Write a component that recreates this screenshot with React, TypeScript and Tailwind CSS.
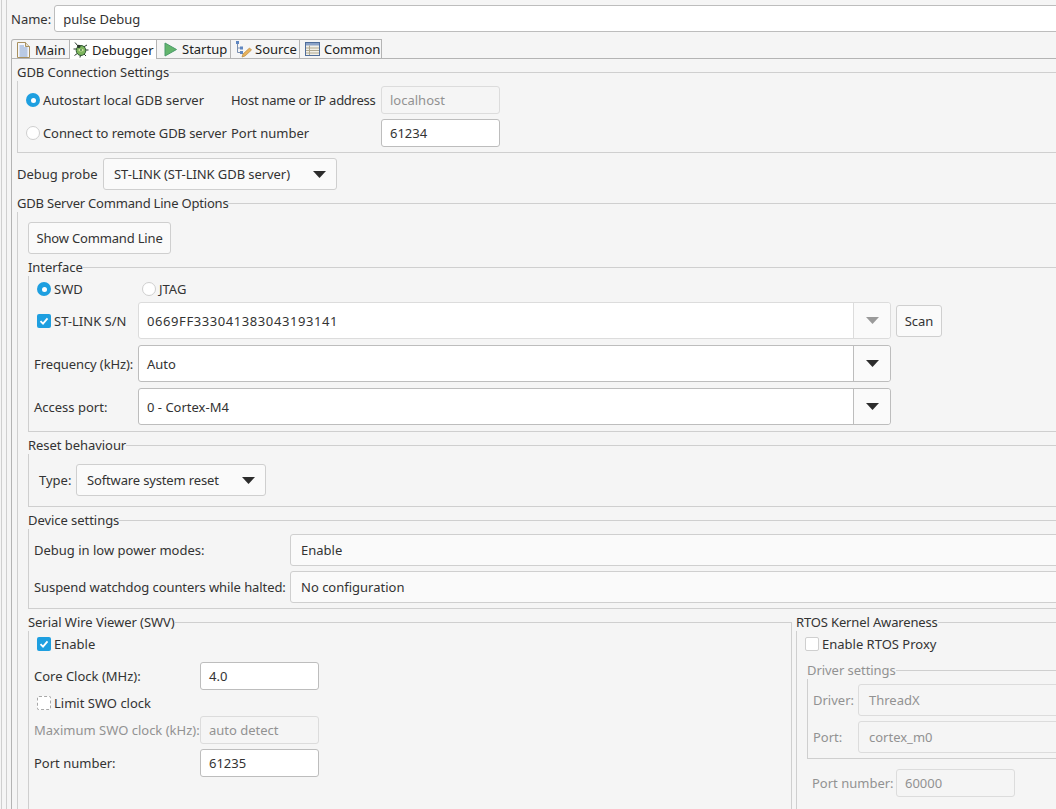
import React from 'react';

const Group: React.FC<{ title: string; muted?: boolean; className?: string; bodyClass?: string; titleClass?: string; children: React.ReactNode }> = ({ title, muted, className = '', bodyClass = '', titleClass = 'tracking-[-0.05px]', children }) => (
  <fieldset className={`min-w-0 border border-[#cfcfcf] ${className}`}>
    <legend className={`-ml-px p-0 h-[18px] leading-[18px] ${titleClass} ${muted ? 'text-[#929292]' : ''}`}>{title}</legend>
    <div className={bodyClass}>{children}</div>
  </fieldset>
);

const Radio: React.FC<{ on?: boolean }> = ({ on }) =>
  on ? (
    <span className="flex items-center justify-center w-[14px] h-[14px] rounded-full bg-[#1e9fe0] shrink-0">
      <span className="w-[5px] h-[5px] rounded-full bg-white" />
    </span>
  ) : (
    <span className="w-[14px] h-[14px] rounded-full bg-white border border-[#cfcfcf] shrink-0" />
  );

const Check: React.FC<{ on?: boolean; focus?: boolean }> = ({ on, focus }) =>
  on ? (
    <span className="flex items-center justify-center w-[14px] h-[14px] rounded-[2px] bg-[#1e9fe0] shrink-0">
      <svg width="10" height="10" viewBox="0 0 10 10">
        <path d="M1.5 5.2 L4 7.6 L8.5 2.4" fill="none" stroke="white" strokeWidth="1.8" />
      </svg>
    </span>
  ) : (
    <span className={`w-[14px] h-[14px] rounded-[2px] bg-white shrink-0 border ${focus ? 'border-dashed border-[#a8a8a8]' : 'border-[#cfcfcf]'}`} />
  );

const Input: React.FC<{ value: string; disabled?: boolean; className?: string }> = ({ value, disabled, className = '' }) => (
  <div
    className={`h-[28px] w-[119px] shrink-0 flex items-center pl-[8px] rounded-[3px] border ${
      disabled ? 'bg-[#f5f5f5] border-[#dcdcdc] text-[#929292]' : 'bg-white border-[#bdbdbd]'
    } ${className}`}
  >
    {value}
  </div>
);

const Arrow: React.FC<{ muted?: boolean }> = ({ muted }) => (
  <svg width="13" height="7" viewBox="0 0 13 7" className="shrink-0">
    <path d="M0 0 H13 L6.5 7 Z" fill={muted ? '#9a9a9a' : '#2c2c2c'} />
  </svg>
);

const Button: React.FC<{ label: string; className?: string }> = ({ label, className = '' }) => (
  <div className={`h-[32px] flex items-center justify-center rounded-[3px] border border-[#cfcfcf] bg-[#fafafa] shrink-0 ${className}`}>{label}</div>
);

const Select: React.FC<{ value: string; className?: string; textClass?: string }> = ({ value, className = '', textClass = '' }) => (
  <div className={`h-[32px] flex items-center justify-between pl-[10px] pr-[10px] rounded-[3px] border border-[#cfcfcf] bg-[#fafafa] shrink-0 ${className}`}>
    <span className={textClass}>{value}</span>
    <Arrow />
  </div>
);

const DisabledSelect: React.FC<{ value: string }> = ({ value }) => (
  <div className="h-[32px] flex-1 flex items-center pl-[10px] rounded-[3px] border border-[#dcdcdc] bg-[#f5f5f5] text-[#929292]">{value}</div>
);

const Combo: React.FC<{ value: string; muted?: boolean; textClass?: string }> = ({ value, muted, textClass = '' }) => (
  <div className={`h-[37px] w-[753px] flex rounded-[3px] border bg-white shrink-0 ${muted ? 'border-[#dcdcdc]' : 'border-[#bdbdbd]'}`}>
    <div className={`flex-1 flex items-center pl-[8px] ${textClass}`}>{value}</div>
    <div className={`w-[37px] flex items-center justify-center rounded-r-[3px] border-l bg-[#fafafa] ${muted ? 'border-[#dcdcdc]' : 'border-[#bdbdbd]'}`}>
      <Arrow muted={muted} />
    </div>
  </div>
);

const DocIcon = () => (
  <svg width="13" height="16" viewBox="0 0 13 16" className="shrink-0">
    <path d="M.5 .5 H8.5 L12.5 4.5 V15.5 H.5 Z" fill="#f6f7fb" stroke="#a8905e" />
    <path d="M8.5 .5 V4.5 H12.5" fill="#e6e0cc" stroke="#a8905e" />
    <path d="M2.5 4 H7 M2.5 6 H10.5 M2.5 8 H10.5 M2.5 10 H10.5 M2.5 12 H10.5 M2.5 14 H10.5" stroke="#7d9ccc" />
  </svg>
);

const BugIcon = () => (
  <svg width="16" height="16" viewBox="0 0 16 16" className="shrink-0">
    <path d="M2 .5 L5 4 M14 3 L10.5 5 M.5 7 H4 M12 8 H15.5 M1.5 13.5 L5 11 M13 14 L10.5 11.5 M7 15.5 L7.5 13" stroke="#2b3a2c" fill="none" />
    <ellipse cx="8" cy="8.5" rx="4.8" ry="5" fill="#7cb45c" stroke="#2f5a33" />
    <circle cx="5.8" cy="4.4" r="1.7" fill="#2b3a2c" />
    <path d="M5 8 Q8 5.5 11 8 Q8 11 5 8 Z" fill="#cfe3a0" />
    <circle cx="8" cy="8" r="1" fill="#4d8a4a" />
  </svg>
);

const PlayIcon = () => (
  <svg width="13" height="15" viewBox="0 0 13 15" className="shrink-0">
    <path d="M1 1 L12.5 7.5 L1 14 Z" fill="#63b56c" stroke="#4a9a6a" />
  </svg>
);

const SourceIcon = () => (
  <svg width="17" height="17" viewBox="0 0 17 17" className="shrink-0">
    <path d="M2.5 3 V11.5 H5 M2.5 7 H5" stroke="#7a8fb0" fill="none" />
    <rect x="1" y="0" width="3" height="3" fill="#5f86c0" />
    <rect x="5" y="5.5" width="3" height="3" fill="#5f86c0" />
    <rect x="5" y="10" width="3" height="3" fill="#5f86c0" />
    <path d="M7 16 L8 13 L14.5 7 L16.5 9 L10 15 Z" fill="#e8b25c" stroke="#b98a3c" strokeWidth=".7" />
  </svg>
);

const TableIcon = () => (
  <svg width="15" height="14" viewBox="0 0 15 14" className="shrink-0">
    <rect x=".5" y=".5" width="14" height="13" fill="#f2f0e8" stroke="#4f6d9a" />
    <rect x="1" y="1" width="13" height="2.5" fill="#8aa2c8" />
    <path d="M1 6 H14 M1 8.5 H14 M1 11 H14 M4.5 3.5 V13" stroke="#b0a890" />
  </svg>
);

const tabs = [
  { label: 'Main', icon: <DocIcon />, cls: 'w-[59px] gap-[5px] pl-[5px] border-l rounded-tl-[3px]' },
  { label: 'Debugger', icon: <BugIcon />, cls: 'w-[87px] gap-[3px] pl-[3px] bg-white' },
  { label: 'Startup', icon: <PlayIcon />, cls: 'w-[74px] gap-[5px] pl-[7px] border-b' },
  { label: 'Source', icon: <SourceIcon />, cls: 'w-[69px] gap-[3px] pl-[4px] border-b' },
  { label: 'Common', icon: <TableIcon />, cls: 'w-[82px] gap-[4px] pl-[5px] border-b' },
];

export default function App() {
  return (
    <div className="w-[1056px] h-[809px] overflow-hidden bg-[#f5f5f5] text-[#333333] text-[13px] leading-[20px] pl-[1px]" style={{ fontFamily: '"Noto Sans", "Open Sans", sans-serif' }}>
      <div className="h-full border-l border-[#cfcfcf] pl-[4px]">
        <div className="h-full border-l border-[#cfcfcf] pl-[4px] pt-[5px]">
          <div className="flex items-center gap-[3px] h-[27px]">
            <span>Name:</span>
            <div className="flex-1 -mr-[20px] h-[27px] flex items-center pl-[8px] bg-white rounded-[3px] border border-[#bdbdbd]">pulse Debug</div>
          </div>

          <div className="pt-[7px]">
            <div className="flex h-[20px] relative z-10 -mb-px text-[#222222]">
              {tabs.map(t => (
                <div key={t.label} className={`${t.cls} flex items-center h-[20px] border-t border-r border-[#b4b4b4]`}>
                  {t.icon}
                  <span>{t.label}</span>
                </div>
              ))}
            </div>
            <div className="border-l border-t border-[#b4b4b4] pl-[5px] pt-[4px] -mr-[20px] h-[760px]">
              <Group title="GDB Connection Settings" className="-mr-[10px]" bodyClass="pl-[8px] pt-[5px] pb-[5px]">
                <div className="flex items-center h-[28px] whitespace-nowrap">
                  <Radio on />
                  <span className="ml-[3px] w-[188px]">Autostart local GDB server</span>
                  <span className="w-[150px] tracking-[-0.26px]">Host name or IP address</span>
                  <Input value="localhost" disabled />
                </div>
                <div className="flex items-center h-[28px] mt-[5px] whitespace-nowrap">
                  <Radio />
                  <span className="ml-[3px] w-[188px] tracking-[-0.1px]">Connect to remote GDB server</span>
                  <span className="w-[150px]">Port number</span>
                  <Input value="61234" />
                </div>
              </Group>

              <div className="flex items-center mt-[5px]">
                <span className="w-[86px]">Debug probe</span>
                <Select value="ST-LINK (ST-LINK GDB server)" className="w-[234px]" textClass="tracking-[-0.07px]" />
              </div>

              <Group title="GDB Server Command Line Options" titleClass="tracking-[-0.2px]" className="mt-[4px] -mr-[10px] h-[620px]" bodyClass="pl-[10px] pt-[10px]">
                <Button label="Show Command Line" className="w-[143px] tracking-[-0.17px]" />

                <Group title="Interface" className="mt-[4px]" bodyClass="pl-[5px] pb-[6px]">
                  <div className="flex items-center h-[22px] mt-[2px] pl-[3px]">
                    <Radio on />
                    <span className="ml-[3px] w-[88px]">SWD</span>
                    <Radio />
                    <span className="ml-[3px]">JTAG</span>
                  </div>
                  <div className="flex items-center mt-[2px]">
                    <div className="w-[104px] flex items-center pl-[3px]">
                      <Check on />
                      <span className="ml-[3px]">ST-LINK S/N</span>
                    </div>
                    <Combo value="0669FF333041383043193141" muted textClass="tracking-[0.58px]" />
                    <Button label="Scan" className="w-[46px] ml-[5px]" />
                  </div>
                  <div className="flex items-center mt-[6px]">
                    <span className="w-[104px] tracking-[-0.1px]">Frequency (kHz):</span>
                    <Combo value="Auto" />
                  </div>
                  <div className="flex items-center mt-[6px]">
                    <span className="w-[104px]">Access port:</span>
                    <Combo value="0 - Cortex-M4" />
                  </div>
                </Group>

                <Group title="Reset behaviour" className="mt-[4px]" bodyClass="pl-[10px] pt-[10px] pb-[10px]">
                  <div className="flex items-center">
                    <span className="w-[37px]">Type:</span>
                    <Select value="Software system reset" className="w-[190px]" textClass="tracking-[-0.15px]" />
                  </div>
                </Group>

                <Group title="Device settings" className="mt-[4px]" bodyClass="pl-[5px] pt-[5px] pb-[5px]">
                  <div className="flex items-center">
                    <span className="w-[256px]">Debug in low power modes:</span>
                    <Select value="Enable" className="flex-1" />
                  </div>
                  <div className="flex items-center mt-[5px]">
                    <span className="w-[256px] tracking-[-0.08px]">Suspend watchdog counters while halted:</span>
                    <Select value="No configuration" className="flex-1" />
                  </div>
                </Group>

                <div className="flex gap-[4px] mt-[4px]">
                  <Group title="Serial Wire Viewer (SWV)" className="w-[764px] shrink-0 h-[220px]" bodyClass="pl-[5px]">
                    <div className="flex items-center h-[26px] pl-[3px]">
                      <Check on />
                      <span className="ml-[3px]">Enable</span>
                    </div>
                    <div className="flex items-center mt-[5px]">
                      <span className="w-[166px]">Core Clock (MHz):</span>
                      <Input value="4.0" />
                    </div>
                    <div className="flex items-center h-[26px] pl-[3px]">
                      <Check focus />
                      <span className="ml-[3px]">Limit SWO clock</span>
                    </div>
                    <div className="flex items-center">
                      <span className="w-[166px] text-[#929292]">Maximum SWO clock (kHz):</span>
                      <Input value="auto detect" disabled />
                    </div>
                    <div className="flex items-center mt-[5px]">
                      <span className="w-[166px]">Port number:</span>
                      <Input value="61235" />
                    </div>
                  </Group>

                  <Group title="RTOS Kernel Awareness" titleClass="tracking-[-0.14px]" className="flex-1 h-[220px]" bodyClass="pl-[8px]">
                    <div className="flex items-center h-[26px]">
                      <Check />
                      <span className="ml-[3px]">Enable RTOS Proxy</span>
                    </div>
                    <Group title="Driver settings" muted className="mt-[4px] ml-[2px]" bodyClass="pl-[5px] pt-[5px] pb-[5px]">
                      <div className="flex items-center text-[#929292]">
                        <span className="w-[45px]">Driver:</span>
                        <DisabledSelect value="ThreadX" />
                      </div>
                      <div className="flex items-center mt-[5px] text-[#929292]">
                        <span className="w-[45px]">Port:</span>
                        <DisabledSelect value="cortex_m0" />
                      </div>
                    </Group>
                    <div className="flex items-center mt-[10px] pl-[7px] text-[#929292]">
                      <span className="w-[84px]">Port number:</span>
                      <Input value="60000" disabled />
                    </div>
                  </Group>
                </div>
              </Group>
            </div>
          </div>
        </div>
      </div>
    </div>
  );
}
